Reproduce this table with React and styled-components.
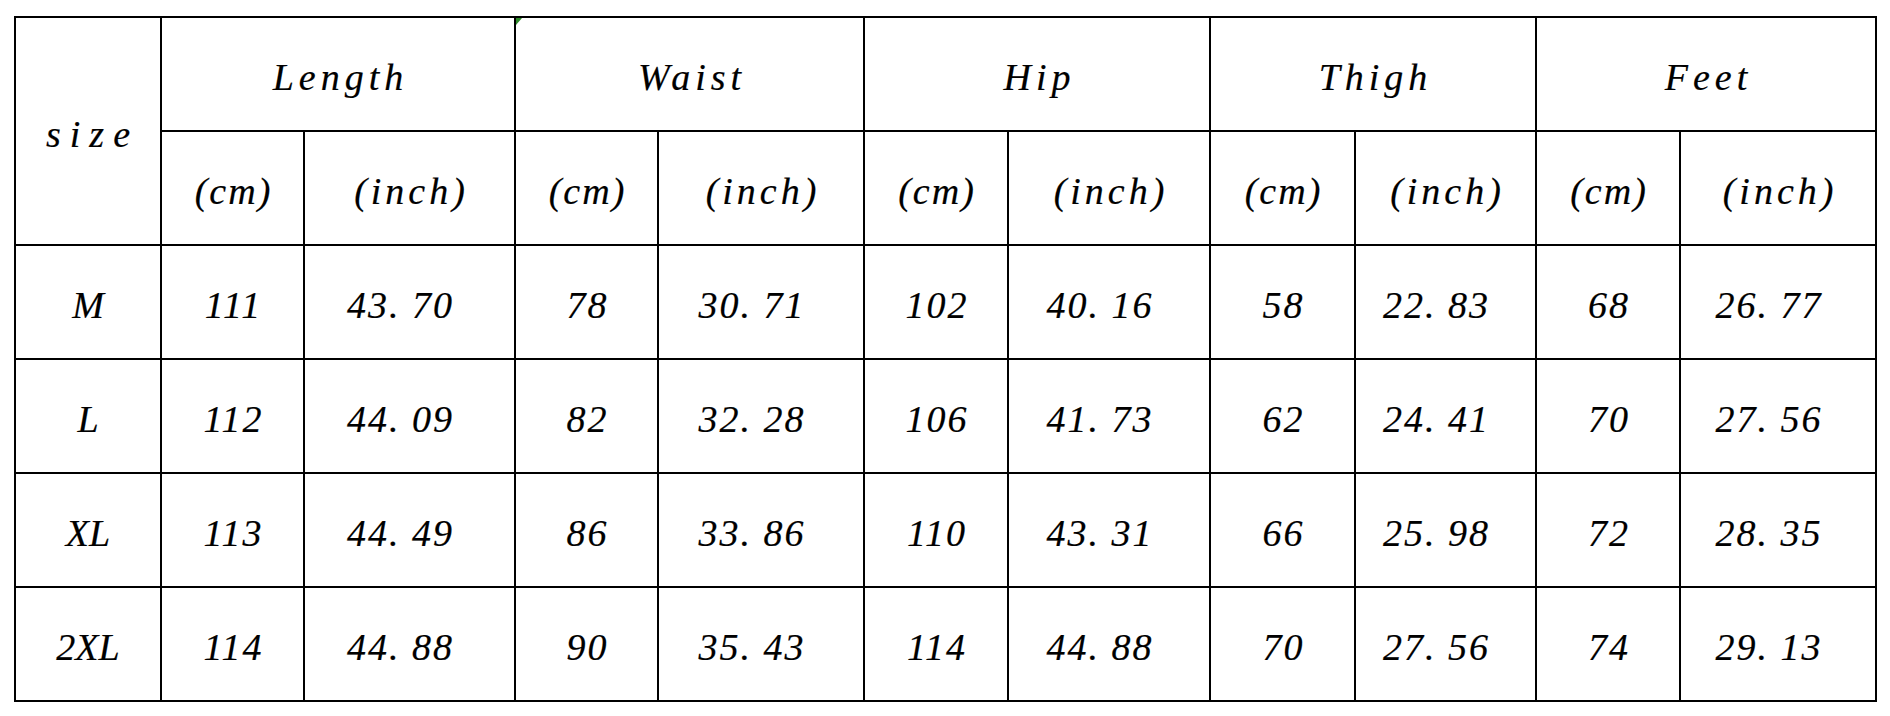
import React from 'react';
import styled, { createGlobalStyle } from 'styled-components';

const Global = createGlobalStyle`
  html, body { margin: 0; padding: 0; background: #ffffff; }
  body { font-family: "Liberation Serif", "Times New Roman", serif; }
`;

const Page = styled.div`
  padding: 16px 0 0 14px;
  width: 1890px;
  height: 716px;
  box-sizing: border-box;
  background: #fff;
`;

const Table = styled.table`
  border-collapse: collapse;
  table-layout: fixed;
  width: 1861px;
  border: 2px solid #000;
  color: #000;
  font-family: "Liberation Serif", "Times New Roman", serif;
  font-style: italic;
  font-size: 38px;
  -webkit-text-stroke: 0.2px #000;
`;

const Col = styled.col`
  width: ${(p) => p.$w}px;
`;

const Row = styled.tr`
  height: 114px;
`;

const Cell = styled.td`
  position: relative;
  border: 2px solid #000;
  padding: 6px ${(p) => p.$pr || 0}px 0 0;
  text-align: center;
  vertical-align: middle;
  letter-spacing: ${(p) => p.$ls || 0}px;
  text-indent: ${(p) => p.$ls || 0}px;
  white-space: nowrap;
  line-height: 1;
`;

const GroupCell = styled(Cell)`
  ${(p) =>
    p.$mark &&
    `
    &::before {
      content: "";
      position: absolute;
      left: 0;
      top: 0;
      width: 0;
      height: 0;
      border-top: 7px solid #2e8a2a;
      border-right: 6px solid transparent;
    }
  `}
`;

const widths = [146, 143, 211, 143, 206, 144, 202, 145, 181, 144, 196];
const groups = ['Length', 'Waist', 'Hip', 'Thigh', 'Feet'];

const rows = [
  ['M', '111', '43. 70', '78', '30. 71', '102', '40. 16', '58', '22. 83', '68', '26. 77'],
  ['L', '112', '44. 09', '82', '32. 28', '106', '41. 73', '62', '24. 41', '70', '27. 56'],
  ['XL', '113', '44. 49', '86', '33. 86', '110', '43. 31', '66', '25. 98', '72', '28. 35'],
  ['2XL', '114', '44. 88', '90', '35. 43', '114', '44. 88', '70', '27. 56', '74', '29. 13'],
];

export default function App() {
  return (
    <Page>
      <Global />
      <Table>
        <colgroup>
          {widths.map((w, i) => (
            <Col key={i} $w={w} />
          ))}
        </colgroup>
        <tbody>
          <Row>
            <Cell rowSpan={2} $ls={9}>size</Cell>
            {groups.map((g, i) => (
              <GroupCell key={g} colSpan={2} $ls={5} $mark={i === 1}>
                {g}
              </GroupCell>
            ))}
          </Row>
          <Row>
            {groups.map((g) => (
              <React.Fragment key={g}>
                <Cell $ls={2}>(cm)</Cell>
                <Cell $ls={4}>(inch)</Cell>
              </React.Fragment>
            ))}
          </Row>
          {rows.map((r) => (
            <Row key={r[0]}>
              {r.map((v, i) => (
                <Cell key={i} $ls={i === 0 ? 0 : 2} $pr={i > 0 && i % 2 === 0 ? 20 : 0}>
                  {v}
                </Cell>
              ))}
            </Row>
          ))}
        </tbody>
      </Table>
    </Page>
  );
}
